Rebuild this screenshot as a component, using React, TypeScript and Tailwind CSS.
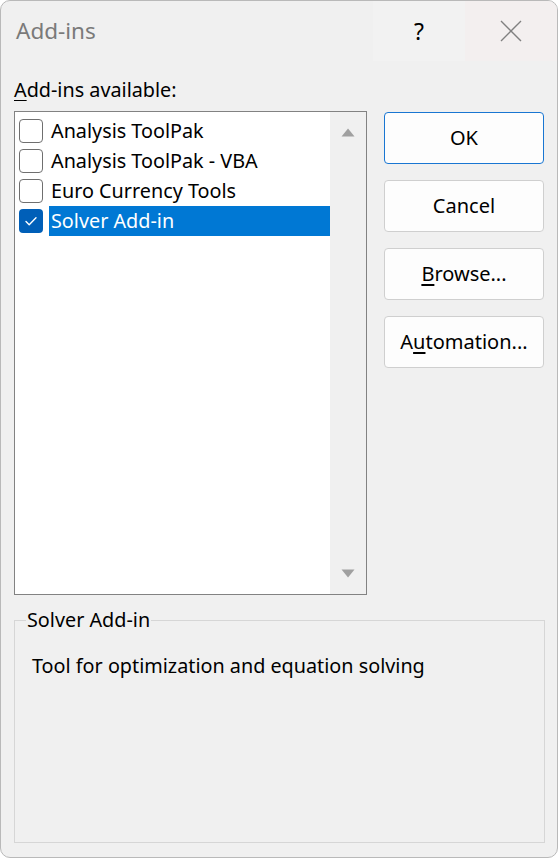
import { useState } from "react";

const items = [
  { name: "Analysis ToolPak", checked: false },
  { name: "Analysis ToolPak - VBA", checked: false },
  { name: "Euro Currency Tools", checked: false },
  { name: "Solver Add-in", checked: true },
];

function CheckBox({ checked }: { checked: boolean }) {
  if (checked) {
    return (
      <span className="flex h-[24px] w-[24px] shrink-0 items-center justify-center rounded-[4px] bg-[#005fb8]">
        <svg width="14" height="14" viewBox="0 0 14 14" fill="none">
          <path d="M2 7.5l3.2 3.2L12 3.8" stroke="white" strokeWidth="1.4" strokeLinecap="round" strokeLinejoin="round" />
        </svg>
      </span>
    );
  }
  return <span className="h-[24px] w-[24px] shrink-0 rounded-[4px] border border-[#6f6f6f] bg-white" />;
}

function Btn({ children, primary }: { children: React.ReactNode; primary?: boolean }) {
  return (
    <button
      className={
        primary
          ? "h-[52px] w-[160px] rounded-[4px] border border-[#1976d2] bg-[#fdfdfd] text-[20px] text-black"
          : "h-[52px] w-[160px] rounded-[4px] border border-[#cfcfcf] bg-[#fdfdfd] text-[20px] text-black"
      }
    >
      {children}
    </button>
  );
}

export default function App() {
  const [selected] = useState(3);
  return (
    <div className="h-[860px] w-[560px] bg-white" style={{ fontFamily: '"Noto Sans", "Open Sans", sans-serif' }}>
      <div className="flex h-[858px] w-[558px] flex-col overflow-hidden rounded-[10px] border border-[#b9b9b9] bg-[#f0f0f0]">
        {/* Title bar */}
        <div className="flex h-[60px] shrink-0 items-stretch">
          <div className="flex flex-1 items-center pl-[15px] text-[22.5px] text-[#7a7a7a]">Add-ins</div>
          <div className="flex w-[92px] items-center justify-center bg-[#f2f2f2] text-[23px] text-black">?</div>
          <div className="flex w-[92px] items-center justify-center bg-[#f3efef]">
            <svg width="22" height="22" viewBox="0 0 22 22">
              <path d="M1 1L21 21M21 1L1 21" stroke="#808080" strokeWidth="1.4" />
            </svg>
          </div>
        </div>

        <div className="flex flex-1 flex-col px-[13px]">
          <div className="mt-[16px] text-[19.8px] leading-[26px] text-black">
            <span className="underline underline-offset-[3px]">A</span>dd-ins available:
          </div>

          <div className="mt-[8px] flex gap-[17px]">
            {/* List box */}
            <div className="flex h-[484px] w-[354px] border border-[#828282] bg-white">
              <div className="flex-1 pt-[4px] pl-[4px]">
                {items.map((it, i) => (
                  <div key={it.name} className="flex h-[30px] items-center">
                    <div className="flex h-[30px] w-[30px] items-center">
                      <CheckBox checked={it.checked} />
                    </div>
                    <div
                      className={
                        i === selected
                          ? "flex h-[30px] flex-1 items-center bg-[#0078d4] pl-[2px] text-[19.8px] text-white"
                          : "flex h-[30px] flex-1 items-center pl-[2px] text-[19.8px] text-black"
                      }
                    >
                      {it.name}
                    </div>
                  </div>
                ))}
              </div>
              <div className="flex w-[36px] flex-col items-center justify-between bg-[#f0f0f0] py-[16px]">
                <svg width="14" height="9" viewBox="0 0 14 9">
                  <path d="M7 0.5L13.5 8.5H0.5Z" fill="#a0a0a0" />
                </svg>
                <svg width="14" height="9" viewBox="0 0 14 9">
                  <path d="M7 8.5L13.5 0.5H0.5Z" fill="#a0a0a0" />
                </svg>
              </div>
            </div>

            {/* Buttons */}
            <div className="flex flex-col gap-[16px] pt-[1px]">
              <Btn primary>OK</Btn>
              <Btn>Cancel</Btn>
              <Btn>
                <span className="underline underline-offset-[3px]">B</span>rowse...
              </Btn>
              <Btn>
                A<span className="underline underline-offset-[3px]">u</span>tomation...
              </Btn>
            </div>
          </div>

          {/* Group box */}
          <fieldset className="mt-[12px] h-[236px] w-[531px] border border-[#d6d6d6] px-[17px] pb-0">
            <legend className="ml-[-6px] px-[1px] text-[19.8px] leading-[26px] text-black">Solver Add-in</legend>
            <div className="mt-[20px] text-[19.8px] leading-[26px] text-black">Tool for optimization and equation solving</div>
          </fieldset>
        </div>
      </div>
    </div>
  );
}
